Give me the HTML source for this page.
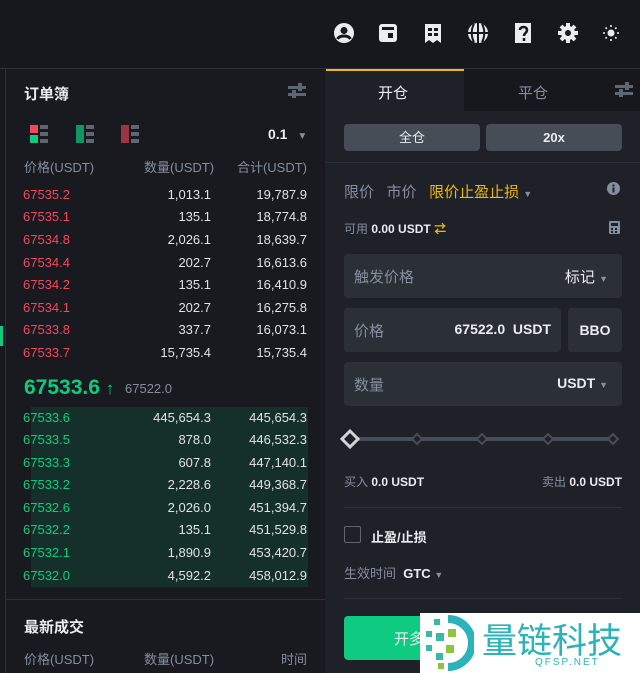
<!DOCTYPE html>
<html><head><meta charset="utf-8"><style>
*{margin:0;padding:0;box-sizing:border-box}
body{width:640px;height:673px;overflow:hidden;background:#16181d;font-family:"Liberation Sans","Noto Sans CJK SC",sans-serif;color:#eaecef;position:relative;font-size:13px}
.a{position:absolute}
.ico{position:absolute;top:22px;width:22px;height:22px}
.left{left:5px;top:69px;width:319px;height:604px;background:#181a20;border-left:1px solid #2b2f36}
.right{left:325px;top:69px;width:315px;height:604px;background:#1e2128}
.row{position:absolute;left:23px;width:284px;height:22px;font-size:13px;font-weight:normal;color:#dfe2e6}
.row span{position:absolute}
.p{left:0}.q{right:96px}.t{right:0}
.r{color:#f6465d}.g{color:#0ecb81}
.gr{color:#848e9c}
.inp{position:absolute;background:#2b2f36;border-radius:4px}
</style></head><body>
<svg class="ico" style="left:333px" viewBox="0 0 22 22"><circle cx="11" cy="11" r="10" fill="#eaecef"/><circle cx="11" cy="8.5" r="3.5" fill="#16181d"/><path d="M4.5 17c2-4 11-4 13 0" stroke="#16181d" stroke-width="3" fill="none"/></svg>
<svg class="ico" style="left:377px" viewBox="0 0 22 22"><rect x="2" y="2" width="18" height="18" rx="3" fill="#eaecef"/><rect x="5" y="5" width="12" height="3" fill="#16181d"/><rect x="11" y="11" width="5" height="5" fill="#16181d"/></svg>
<svg class="ico" style="left:422px" viewBox="0 0 22 22"><path d="M3 2h16v19l-4-3-4 3-4-3-4 3z" fill="#eaecef"/><rect x="6" y="6" width="4" height="3" fill="#16181d"/><rect x="12" y="6" width="4" height="3" fill="#16181d"/><rect x="6" y="11" width="4" height="3" fill="#16181d"/><rect x="12" y="11" width="4" height="3" fill="#16181d"/></svg>
<svg class="ico" style="left:467px" viewBox="0 0 22 22"><circle cx="11" cy="11" r="10" fill="#eaecef"/><path d="M11 1v20M1 11h20M7 2c-3 5-3 13 0 18M15 2c3 5 3 13 0 18" stroke="#16181d" stroke-width="2" fill="none"/></svg>
<svg class="ico" style="left:512px" viewBox="0 0 22 22"><path d="M3 1h16v20H3z" fill="#eaecef"/><path d="M8 8c0-4 7-4 7 0 0 3-3 3-3 6M12 16v3" stroke="#16181d" stroke-width="2.5" fill="none"/></svg>
<svg class="ico" style="left:557px" viewBox="0 0 22 22"><circle cx="11" cy="11" r="7" fill="#eaecef"/><g stroke="#eaecef" stroke-width="4"><path d="M11 1v20M1 11h20M4 4l14 14M18 4L4 18"/></g><circle cx="11" cy="11" r="3" fill="#16181d"/></svg>
<svg class="ico" style="left:600px" viewBox="0 0 22 22"><circle cx="11" cy="11" r="3.5" fill="#eaecef"/><g stroke="#eaecef" stroke-width="1.6"><path d="M11 3v2M11 17v2M3 11h2M17 11h2M5.5 5.5l1.3 1.3M15.2 15.2l1.3 1.3M16.5 5.5l-1.3 1.3M6.8 15.2l-1.3 1.3"/></g></svg>
<div class="a" style="left:0;top:68px;width:640px;height:1px;background:#2b2f36"></div>
<div class="a" style="left:0;top:326px;width:3px;height:20px;background:#0ecb81"></div>

<div class="a left">
<div class="a" style="left:18px;top:14px;font-size:15px;font-weight:bold">订单簿</div>
<svg class="a" style="left:282px;top:14px" width="18" height="16" viewBox="0 0 18 16"><g fill="#5e6673"><rect x="0" y="3" width="18" height="3"/><rect x="0" y="10" width="18" height="3"/><rect x="10" y="0" width="4" height="8"/><rect x="4" y="7" width="4" height="8"/></g></svg>
<svg class="a" style="left:24px;top:56px" width="20" height="18"><rect x="0" y="0" width="8" height="8" fill="#f6465d"/><rect x="0" y="10" width="8" height="8" fill="#0ecb81"/><rect x="10" y="0" width="8" height="4" fill="#5e6673"/><rect x="10" y="7" width="8" height="4" fill="#5e6673"/><rect x="10" y="14" width="8" height="4" fill="#5e6673"/></svg>
<svg class="a" style="left:70px;top:56px" width="20" height="18"><rect x="0" y="0" width="8" height="18" fill="#0ecb81" opacity=".7"/><rect x="10" y="0" width="8" height="4" fill="#5e6673"/><rect x="10" y="7" width="8" height="4" fill="#5e6673"/><rect x="10" y="14" width="8" height="4" fill="#5e6673"/></svg>
<svg class="a" style="left:115px;top:56px" width="20" height="18"><rect x="0" y="0" width="8" height="18" fill="#f6465d" opacity=".6"/><rect x="10" y="0" width="8" height="4" fill="#5e6673"/><rect x="10" y="7" width="8" height="4" fill="#5e6673"/><rect x="10" y="14" width="8" height="4" fill="#5e6673"/></svg>
<div class="a" style="left:262px;top:57px;font-weight:bold;font-size:14px">0.1 <span style="color:#848e9c;font-size:10px;margin-left:6px">▼</span></div>
<div class="a gr" style="left:18px;top:88px;font-size:13px">价格(USDT)</div>
<div class="a gr" style="left:138px;top:88px;font-size:13px">数量(USDT)</div>
<div class="a gr" style="right:17px;top:88px;font-size:13px">合计(USDT)</div>
<div class="a" style="left:25px;top:338px;width:277px;height:180px;background:#15302a"></div>
<div class="a" style="left:18px;top:307px;font-size:21px;font-weight:bold;color:#0ecb81">67533.6 <span style="font-size:17px">↑</span></div>
<div class="a gr" style="left:119px;top:312px;font-size:13px">67522.0</div>
<div class="a" style="left:0;top:530px;width:319px;height:1px;background:#2b2f36"></div>
<div class="a" style="left:18px;top:547px;font-size:15px;font-weight:bold">最新成交</div>
<div class="a gr" style="left:18px;top:580px">价格(USDT)</div>
<div class="a gr" style="left:138px;top:580px">数量(USDT)</div>
<div class="a gr" style="right:17px;top:580px">时间</div>
</div>
<div class="row" style="top:187px"><span class="p r">67535.2</span><span class="q">1,013.1</span><span class="t">19,787.9</span></div>
<div class="row" style="top:209px"><span class="p r">67535.1</span><span class="q">135.1</span><span class="t">18,774.8</span></div>
<div class="row" style="top:232px"><span class="p r">67534.8</span><span class="q">2,026.1</span><span class="t">18,639.7</span></div>
<div class="row" style="top:255px"><span class="p r">67534.4</span><span class="q">202.7</span><span class="t">16,613.6</span></div>
<div class="row" style="top:277px"><span class="p r">67534.2</span><span class="q">135.1</span><span class="t">16,410.9</span></div>
<div class="row" style="top:300px"><span class="p r">67534.1</span><span class="q">202.7</span><span class="t">16,275.8</span></div>
<div class="row" style="top:322px"><span class="p r">67533.8</span><span class="q">337.7</span><span class="t">16,073.1</span></div>
<div class="row" style="top:345px"><span class="p r">67533.7</span><span class="q">15,735.4</span><span class="t">15,735.4</span></div>
<div class="row" style="top:410px"><span class="p g">67533.6</span><span class="q">445,654.3</span><span class="t">445,654.3</span></div>
<div class="row" style="top:432px"><span class="p g">67533.5</span><span class="q">878.0</span><span class="t">446,532.3</span></div>
<div class="row" style="top:455px"><span class="p g">67533.3</span><span class="q">607.8</span><span class="t">447,140.1</span></div>
<div class="row" style="top:477px"><span class="p g">67533.2</span><span class="q">2,228.6</span><span class="t">449,368.7</span></div>
<div class="row" style="top:500px"><span class="p g">67532.6</span><span class="q">2,026.0</span><span class="t">451,394.7</span></div>
<div class="row" style="top:522px"><span class="p g">67532.2</span><span class="q">135.1</span><span class="t">451,529.8</span></div>
<div class="row" style="top:545px"><span class="p g">67532.1</span><span class="q">1,890.9</span><span class="t">453,420.7</span></div>
<div class="row" style="top:568px"><span class="p g">67532.0</span><span class="q">4,592.2</span><span class="t">458,012.9</span></div>

<div class="a right">
<div class="a" style="left:139px;top:0;width:176px;height:42px;background:#16181d"></div>
<div class="a" style="left:1px;top:0;width:138px;height:2px;background:#f0b90b"></div>
<div class="a" style="left:53px;top:13px;font-size:15px">开仓</div>
<div class="a gr" style="left:193px;top:13px;font-size:15px">平仓</div>
<svg class="a" style="left:290px;top:13px" width="18" height="16" viewBox="0 0 18 16"><g fill="#5e6673"><rect x="0" y="3" width="18" height="3"/><rect x="0" y="10" width="18" height="3"/><rect x="10" y="0" width="4" height="8"/><rect x="4" y="7" width="4" height="8"/></g></svg>
<div class="inp" style="left:19px;top:55px;width:136px;height:27px;background:#474d57;text-align:center;line-height:27px;font-size:13px">全仓</div>
<div class="inp" style="left:161px;top:55px;width:136px;height:27px;background:#474d57;text-align:center;line-height:27px;font-weight:bold;font-size:13px">20x</div>
<div class="a" style="left:0;top:93px;width:315px;height:1px;background:#2b2f36"></div>
<div class="a" style="left:19px;top:112px;font-size:15px"><span class="gr">限价</span>&nbsp;&nbsp; <span class="gr">市价</span>&nbsp;&nbsp; <span style="color:#f0b90b">限价止盈止损</span> <span class="gr" style="font-size:9px">▼</span></div>
<svg class="a" style="left:282px;top:113px" width="13" height="13"><circle cx="6.5" cy="6.5" r="6.5" fill="#848e9c"/><rect x="5.5" y="5.5" width="2" height="5" fill="#1e2128"/><rect x="5.5" y="2.5" width="2" height="2" fill="#1e2128"/></svg>
<div class="a" style="left:19px;top:151px;font-size:12px"><span class="gr">可用</span> <b>0.00 USDT</b> <span style="color:#f0b90b;font-weight:bold">⇄</span></div>
<svg class="a" style="left:284px;top:152px" width="11" height="13"><rect x="0" y="0" width="11" height="13" rx="1" fill="#848e9c"/><rect x="2" y="2" width="7" height="3" fill="#1e2128"/><rect x="2" y="7" width="2" height="2" fill="#1e2128"/><rect x="6" y="7" width="2" height="2" fill="#1e2128"/><rect x="2" y="10" width="2" height="2" fill="#1e2128"/><rect x="6" y="10" width="2" height="2" fill="#1e2128"/></svg>
<div class="inp" style="left:19px;top:185px;width:278px;height:44px"><span class="a gr" style="left:10px;top:12px;font-size:15px">触发价格</span><span class="a" style="right:14px;top:12px;font-size:15px">标记 <span class="gr" style="font-size:9px">▼</span></span></div>
<div class="inp" style="left:19px;top:239px;width:217px;height:44px"><span class="a gr" style="left:10px;top:12px;font-size:15px">价格</span><span class="a" style="right:10px;top:13px;font-size:14px;font-weight:bold">67522.0&nbsp; USDT</span></div>
<div class="inp" style="left:243px;top:239px;width:54px;height:44px;text-align:center;line-height:44px;font-size:14px;font-weight:bold">BBO</div>
<div class="inp" style="left:19px;top:293px;width:278px;height:44px"><span class="a gr" style="left:10px;top:12px;font-size:15px">数量</span><span class="a" style="right:14px;top:13px;font-size:14px;font-weight:bold">USDT <span class="gr" style="font-size:9px">▼</span></span></div>
<svg class="a" style="left:14px;top:358px" width="290" height="24"><rect x="12" y="10" width="266" height="4" fill="#474d57"/><g fill="#1e2128" stroke="#474d57" stroke-width="2"><path d="M78 7l5 5-5 5-5-5z"/><path d="M143 7l5 5-5 5-5-5z"/><path d="M209 7l5 5-5 5-5-5z"/><path d="M274 7l5 5-5 5-5-5z"/></g><path d="M11 4l8 8-8 8-8-8z" fill="#1e2128" stroke="#d0d3d8" stroke-width="3"/></svg>
<div class="a" style="left:19px;top:404px;font-size:12px"><span class="gr">买入</span> <b>0.0 USDT</b></div>
<div class="a" style="right:18px;top:404px;font-size:12px"><span class="gr">卖出</span> <b>0.0 USDT</b></div>
<div class="a" style="left:19px;top:438px;width:278px;height:1px;background:#2b2f36"></div>
<div class="a" style="left:19px;top:457px;width:17px;height:17px;border:1px solid #5e6673;border-radius:2px"></div>
<div class="a" style="left:46px;top:458px;font-size:13px;font-weight:bold">止盈/止损</div>
<div class="a" style="left:19px;top:494px;font-size:13px"><span class="gr">生效时间</span>&nbsp; <b>GTC</b> <span class="gr" style="font-size:9px">▼</span></div>
<div class="a" style="left:19px;top:529px;width:278px;height:1px;background:#2b2f36"></div>
<div class="a" style="left:19px;top:547px;width:278px;height:44px;background:#0ecb81;border-radius:4px"><span class="a" style="left:50px;top:12px;font-size:15px">开多</span></div>
</div>
<div class="a" style="left:420px;top:613px;width:220px;height:60px;background:#fff">
<svg class="a" style="left:2px;top:2px" width="52" height="56"><path d="M26 4a24 24 0 0 1 0 48" stroke="#2ab3b8" stroke-width="8" fill="none"/><g fill="#3ab8a8"><rect x="12" y="4" width="6" height="6"/><rect x="4" y="16" width="6" height="6"/><rect x="14" y="18" width="8" height="8"/><rect x="4" y="30" width="6" height="6"/><rect x="14" y="38" width="7" height="7"/></g><g fill="#8cc63f"><rect x="26" y="14" width="8" height="8"/><rect x="24" y="30" width="8" height="8"/><rect x="16" y="48" width="6" height="6"/></g></svg>
<div class="a" style="left:62px;top:0px;font-size:35px;color:#2ab3b8;font-family:'Noto Sans CJK SC',sans-serif;white-space:nowrap">量链科技</div>
<div class="a" style="left:115px;top:44px;font-size:10px;color:#2ab3b8;letter-spacing:2px">QFSP.NET</div>
</div>
</body></html>
